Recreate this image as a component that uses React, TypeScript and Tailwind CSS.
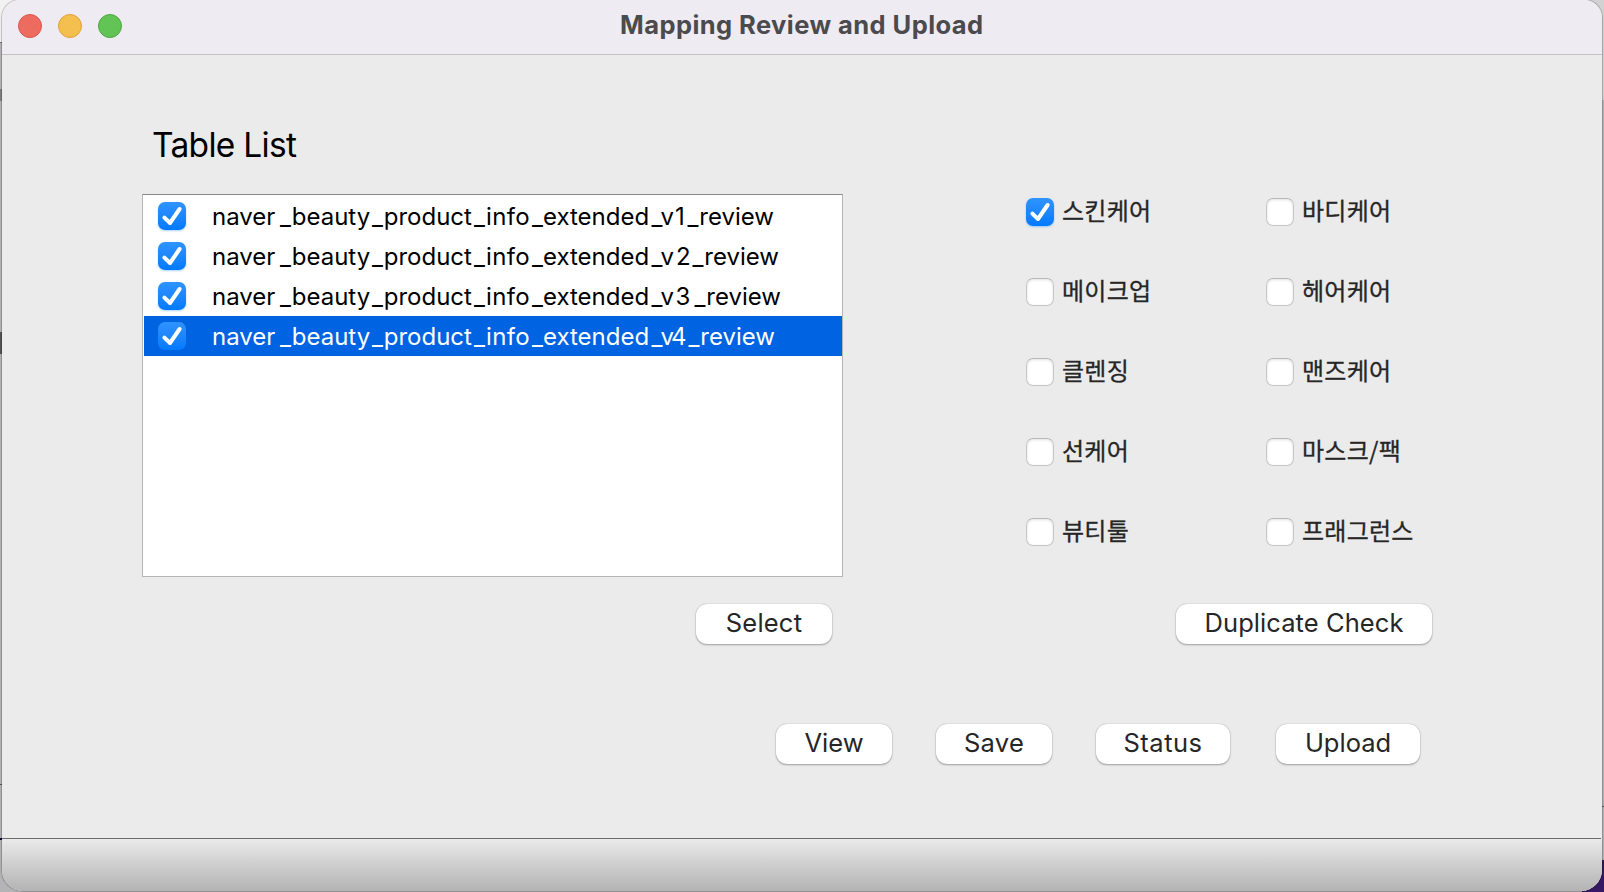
import React from "react";

type Row = { digit: string; cell: string };

const rows: Row[] = [
  { digit: "1", cell: "w-[12.5px]" },
  { digit: "2", cell: "w-[17.5px] pl-[1px]" },
  { digit: "3", cell: "w-[19.5px] pl-[0.5px]" },
  { digit: "4", cell: "-ml-[4px] w-[17.5px]" },
];

const left = ["스킨케어", "메이크업", "클렌징", "선케어", "뷰티툴"];
const right = ["바디케어", "헤어케어", "맨즈케어", "마스크/팩", "프래그런스"];

function Check({ on, flat }: { on?: boolean; flat?: boolean }) {
  if (!on)
    return (
      <span className="block size-7 shrink-0 rounded-[7px] border border-[#c6c6c6] border-t-[#b9b9b9] bg-white shadow-[inset_0_1px_3px_rgba(0,0,0,0.12)]" />
    );
  return (
    <span
      className={`block size-7 shrink-0 rounded-[7px] bg-linear-to-b from-[#2f93ff] to-[#017aff] ${flat ? "" : "shadow-[0_1px_2px_rgba(0,122,255,0.35)]"}`}
    >
      <svg viewBox="0 0 28 28" className="block size-7" fill="none" stroke="#fff" strokeWidth="4" strokeLinecap="round" strokeLinejoin="round">
        <path d="M6.4 15.6 L12 21 L21.6 7" />
      </svg>
    </span>
  );
}

function Button({ children, className }: { children: React.ReactNode; className: string }) {
  return (
    <button
      className={`h-10 shrink-0 rounded-[11px] bg-white text-[25.5px] leading-[38px] whitespace-nowrap text-[#262626] shadow-[0_0_1px_rgba(0,0,0,0.35),0_1px_2px_rgba(0,0,0,0.3)] ${className}`}
    >
      <span className="block h-10">{children}</span>
    </button>
  );
}

function Column({ items, first }: { items: string[]; first?: boolean }) {
  return (
    <div className="flex w-60 flex-col gap-[52px]">
      {items.map((t, i) => (
        <label key={t} className="flex h-7 items-center">
          <Check on={first && i === 0} />
          <span className="mb-[5px] ml-[8px] font-['Noto_Sans_CJK_KR',sans-serif] text-[24px] leading-7 tracking-[0.25px] whitespace-nowrap text-[#262626] [-webkit-text-stroke:0.3px_#262626]">
            {t}
          </span>
        </label>
      ))}
    </div>
  );
}

export default function App() {
  return (
    <div className="relative h-[892px] w-[1604px] overflow-hidden bg-[#b4b4b6] font-['Inter',sans-serif]">
      <div className="absolute top-0 left-0 h-[42px] w-5 bg-[#f2f2f2]" />
      <div className="absolute top-[42px] left-0 h-px w-[2px] bg-[#777]" />
      <div className="absolute top-[89px] left-0 h-3 w-[2px] bg-[#808080]" />
      <div className="absolute top-[332px] left-0 h-[22px] w-[2px] bg-[#555]" />
      <div className="absolute top-[784px] left-0 h-px w-[2px] bg-[#555]" />
      <div className="absolute top-[838px] left-0 h-[2px] w-[2px] bg-[#120a3a]" />
      <div className="absolute top-0 right-0 h-[100px] w-5 bg-[#d2d2d2]" />
      <div className="absolute top-[806px] right-0 h-px w-[2px] bg-[#555]" />
      <div className="absolute right-0 bottom-0 h-8 w-[22px] bg-[#351763]" />

      <div className="relative ml-[2px] flex h-[891px] w-[1600px] flex-col overflow-hidden rounded-t-[18px] rounded-b-[21px] bg-[#ebebeb] shadow-[0_0_1px_1px_rgba(0,0,0,0.22)]">
        <header className="flex h-[55px] shrink-0 border-b border-[#c4c3c6] bg-[#efebf3]">
          <div className="flex w-[616px] gap-4 pt-[14px] pl-4">
            <span className="size-6 rounded-full border border-[#d9564c] bg-[#ed6b5f]" />
            <span className="size-6 rounded-full border border-[#dca13c] bg-[#f5bf4f]" />
            <span className="size-6 rounded-full border border-[#4ea73f] bg-[#61c455]" />
          </div>
          <h1 className="pl-[2px] text-[25.5px] leading-[50px] font-bold tracking-[0.43px] whitespace-nowrap text-[#4b4a4d]">
            Mapping Review and Upload
          </h1>
        </header>

        <main className="flex h-[783px] shrink-0 flex-col">
          <div className="flex h-[528px]">
            <section className="ml-[140px] w-[701px] pt-[68px]">
              <h2 className="pl-[10px] text-[33.5px] leading-[45px] tracking-[-0.7px] text-black">Table List</h2>
              <div className="mt-[26px] h-[383px] border border-[#b5b5b5] border-t-[#8a8a8a] bg-white px-px pt-px">
                {rows.map((r, i) => (
                  <div
                    key={r.digit}
                    className={`flex h-10 items-center pl-[14px] text-[24px] leading-10 whitespace-pre ${i === 3 ? "-mr-px bg-[#0063e1] text-white" : "text-black"}`}
                  >
                    <Check on flat={i === 3} />
                    <span className="ml-[26px] flex pt-[2px]">
                      <span className="w-[68px]">naver</span>
                      <span className="w-[92px]">_beauty</span>
                      <span className="w-[102px]">_product</span>
                      <span className="w-[58px] tracking-[0.3px]">_info</span>
                      <span className="w-[119.5px]">_extended</span>
                      <span className="w-[23.5px]">_v</span>
                      <span className={r.cell}>{r.digit}</span>
                      <span>_review</span>
                    </span>
                  </div>
                ))}
              </div>
            </section>
            <section className="ml-[183px] flex pt-[143px]">
              <Column items={left} first />
              <Column items={right} />
            </section>
          </div>
          <div className="mt-[21px] flex">
            <Button className="ml-[694px] w-[136px] tracking-[0.2px]">Select</Button>
            <Button className="ml-[344px] w-[256px] tracking-[0.07px]">Duplicate Check</Button>
          </div>
          <div className="mt-20 flex">
            <Button className="ml-[774px] w-[116px]">View</Button>
            <Button className="ml-[44px] w-[116px] tracking-[0.3px]">Save</Button>
            <Button className="ml-[44px] w-[134px] tracking-[0.5px]">Status</Button>
            <Button className="ml-[46px] w-[144px]">Upload</Button>
          </div>
        </main>
        <footer className="flex-1 bg-linear-to-b from-[#ebebeb] to-[#b3b3b3]">
          <div className="h-px w-[1599px] bg-[#6b6b6b]" />
        </footer>
      </div>
    </div>
  );
}
